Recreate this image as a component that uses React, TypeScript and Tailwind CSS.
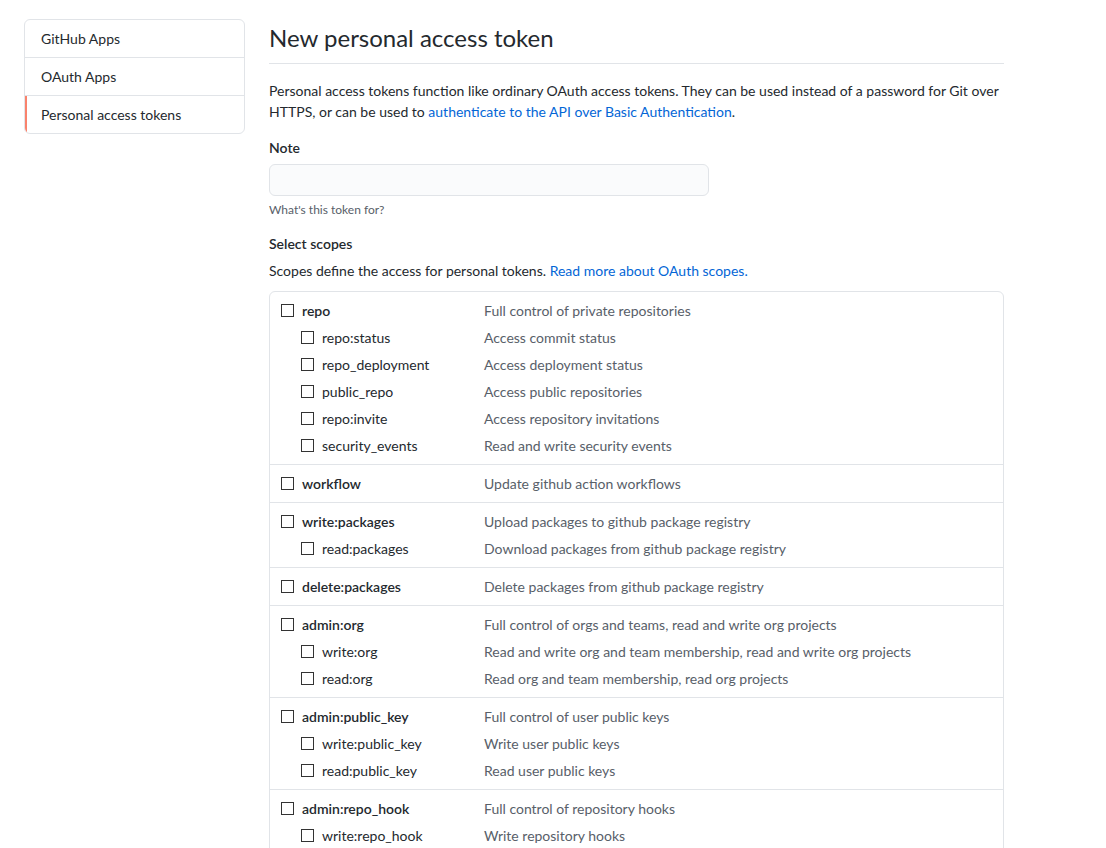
type Scope = { name: string; desc: string; children?: Scope[] };

const scopes: Scope[] = [
  {
    name: 'repo',
    desc: 'Full control of private repositories',
    children: [
      { name: 'repo:status', desc: 'Access commit status' },
      { name: 'repo_deployment', desc: 'Access deployment status' },
      { name: 'public_repo', desc: 'Access public repositories' },
      { name: 'repo:invite', desc: 'Access repository invitations' },
      { name: 'security_events', desc: 'Read and write security events' },
    ],
  },
  { name: 'workflow', desc: 'Update github action workflows' },
  {
    name: 'write:packages',
    desc: 'Upload packages to github package registry',
    children: [{ name: 'read:packages', desc: 'Download packages from github package registry' }],
  },
  { name: 'delete:packages', desc: 'Delete packages from github package registry' },
  {
    name: 'admin:org',
    desc: 'Full control of orgs and teams, read and write org projects',
    children: [
      { name: 'write:org', desc: 'Read and write org and team membership, read and write org projects' },
      { name: 'read:org', desc: 'Read org and team membership, read org projects' },
    ],
  },
  {
    name: 'admin:public_key',
    desc: 'Full control of user public keys',
    children: [
      { name: 'write:public_key', desc: 'Write user public keys' },
      { name: 'read:public_key', desc: 'Read user public keys' },
    ],
  },
  {
    name: 'admin:repo_hook',
    desc: 'Full control of repository hooks',
    children: [
      { name: 'write:repo_hook', desc: 'Write repository hooks' },
      { name: 'read:repo_hook', desc: 'Read repository hooks' },
    ],
  },
];

function Box() {
  return <span className="inline-block w-[13px] h-[13px] border border-[#333] bg-white shrink-0 mr-[8px]" />;
}

function Row({ scope, sub }: { scope: Scope; sub?: boolean }) {
  return (
    <div className="flex items-center h-[27px]">
      <div className={`flex items-center w-[214px] shrink-0 ${sub ? 'pl-[31px]' : 'pl-[11px]'}`}>
        <Box />
        <span className={sub ? 'text-[#24292e]' : 'font-semibold text-[#24292e]'}>{scope.name}</span>
      </div>
      <span className="text-[#586069]">{scope.desc}</span>
    </div>
  );
}

const nav = ['GitHub Apps', 'OAuth Apps', 'Personal access tokens'];

export default function App() {
  return (
    <div className="min-h-screen bg-white text-[14px] text-[#24292e] font-['Segoe_UI','Lato',sans-serif] leading-[21px]">
      <div className="flex pt-[19px] pl-[24px]">
        <nav className="w-[221px] shrink-0 self-start border border-[#e1e4e8] rounded-[6px] overflow-hidden">
          {nav.map((n, i) => (
            <div
              key={n}
              className={`relative flex items-center pl-[16px] ${i > 0 ? 'h-[38px] border-t border-[#e1e4e8]' : 'h-[37px]'}`}
            >
              {i === 2 && <span className="absolute left-0 top-0 bottom-0 w-[2px] bg-[#f9826c]" />}
              {n}
            </div>
          ))}
        </nav>

        <main className="ml-[24px] w-[735px]">
          <h1 className="text-[24px] leading-[36px] pt-[1px] pb-[7px] border-b border-[#e1e4e8] font-normal">New personal access token</h1>
          <p className="mt-[16px]">
            Personal access tokens function like ordinary OAuth access tokens. They can be used instead of a password for Git over
            HTTPS, or can be used to <a className="text-[#0366d6]">authenticate to the API over Basic Authentication</a>.
          </p>

          <div className="mt-[15px] font-semibold">Note</div>
          <input className="mt-[6px] block w-[440px] h-[32px] bg-[#fafbfc] border border-[#e1e4e8] rounded-[6px] outline-none" />
          <div className="mt-[4px] text-[12px] leading-[20px] text-[#586069]">What's this token for?</div>

          <div className="mt-[13px] font-semibold">Select scopes</div>
          <p className="mt-[6px]">
            Scopes define the access for personal tokens. <a className="text-[#0366d6]">Read more about OAuth scopes.</a>
          </p>

          <div className="mt-[10px] border border-[#e1e4e8] rounded-[6px]">
            {scopes.map((s, i) => (
              <div key={s.name} className={`py-[5px] ${i > 0 ? 'border-t border-[#e1e4e8]' : ''}`}>
                <Row scope={s} />
                {s.children?.map(c => <Row key={c.name} scope={c} sub />)}
              </div>
            ))}
          </div>
        </main>
      </div>
    </div>
  );
}
